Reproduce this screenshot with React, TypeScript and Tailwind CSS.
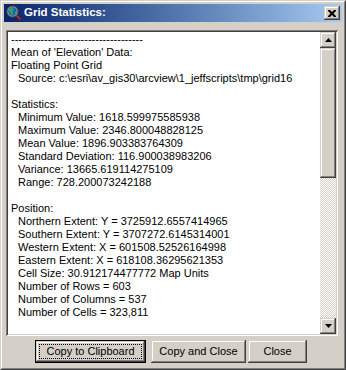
import React from "react";

const raised =
  "bg-[#d4d0c8] shadow-[inset_-1px_-1px_#404040,inset_1px_1px_#d4d0c8,inset_-2px_-2px_#808080,inset_2px_2px_#ffffff]";

const lines: { text: string; indent?: boolean }[] = [
  { text: "------------------------------------" },
  { text: "Mean of 'Elevation' Data:" },
  { text: "Floating Point Grid" },
  { text: "Source: c:\\esri\\av_gis30\\arcview\\1_jeffscripts\\tmp\\grid16", indent: true },
  { text: "" },
  { text: "Statistics:" },
  { text: "Minimum Value: 1618.599975585938", indent: true },
  { text: "Maximum Value: 2346.800048828125", indent: true },
  { text: "Mean Value: 1896.903383764309", indent: true },
  { text: "Standard Deviation: 116.900038983206", indent: true },
  { text: "Variance: 13665.619114275109", indent: true },
  { text: "Range: 728.200073242188", indent: true },
  { text: "" },
  { text: "Position:" },
  { text: "Northern Extent: Y = 3725912.6557414965", indent: true },
  { text: "Southern Extent: Y = 3707272.6145314001", indent: true },
  { text: "Western Extent: X = 601508.52526164998", indent: true },
  { text: "Eastern Extent: X = 618108.36295621353", indent: true },
  { text: "Cell Size: 30.912174477772 Map Units", indent: true },
  { text: "Number of Rows = 603", indent: true },
  { text: "Number of Columns = 537", indent: true },
  { text: "Number of Cells = 323,811", indent: true },
];

const GridIcon = () => (
  <svg width="16" height="16" viewBox="0 0 16 16">
    <line x1="10" y1="10" x2="15" y2="15" stroke="#8b1a1a" strokeWidth="2.4" />
    <line x1="10" y1="10" x2="14" y2="14" stroke="#d04040" strokeWidth="1" />
    <circle cx="6.5" cy="6.5" r="5.6" fill="#a0a0a0" stroke="#404040" strokeWidth="1" />
    <circle cx="6.5" cy="6.5" r="4.2" fill="#1f4fd0" />
    <path d="M4 3.5 L7 3 L8 5 L6.5 6.5 L7.5 9 L5.5 10 L4 7.5 L3 5.5 Z" fill="#20b040" />
    <path d="M8.5 7 L10 6.5 L10.3 8.5 L9 9.5 Z" fill="#20b040" />
  </svg>
);

const WinButton = ({
  label,
  width,
  focused,
}: {
  label: string;
  width: string;
  focused?: boolean;
}) =>
  focused ? (
    <div className={`${width} h-[23px] border border-black`}>
      <div className={`${raised} h-full w-full p-[3px]`}>
        <div className="flex h-full w-full items-center justify-center border border-dotted border-black text-[11px]">
          {label}
        </div>
      </div>
    </div>
  ) : (
    <div className={`${raised} ${width} flex h-[23px] items-center justify-center text-[11px]`}>
      {label}
    </div>
  );

export default function App() {
  return (
    <div
      className="relative h-[370px] w-[346px] border border-t-[#d4d0c8] border-l-[#d4d0c8] border-r-[#404040] border-b-[#404040] bg-[#d4d0c8] text-black"
      style={{ fontFamily: '"Liberation Sans", Arial, sans-serif' }}
    >
      <div className="h-full w-full border border-t-white border-l-white border-r-[#808080] border-b-[#808080] p-[2px]">
        {/* title bar */}
        <div className="flex h-[18px] items-center bg-gradient-to-r from-[#0a246a] to-[#a6caf0] pl-[2px] pr-[2px]">
          <GridIcon />
          <span className="ml-[2px] text-[11.5px] font-bold text-white">Grid Statistics:</span>
          <div className={`${raised} ml-auto flex h-[14px] w-[16px] items-center justify-center`}>
            <svg width="8" height="7" viewBox="0 0 8 7">
              <path d="M0 0h2l2 2 2-2h2v1L5.5 3.5 8 6v1H6L4 5 2 7H0V6l2.5-2.5L0 1z" fill="#000" />
            </svg>
          </div>
        </div>

        {/* text box */}
        <div className="ml-[2px] mt-[8px] flex h-[306px] w-[332px] bg-white p-[2px] shadow-[inset_1px_1px_#808080,inset_-1px_-1px_#ffffff,inset_2px_2px_#404040,inset_-2px_-2px_#d4d0c8]">
          <div className="flex-1 overflow-hidden pl-[3px] pt-[1px] text-[11px] leading-[13px]">
            {lines.map((l, i) => (
              <div key={i} className={`h-[13px] whitespace-pre ${l.indent ? "pl-[7px]" : ""}`}>
                {l.text}
              </div>
            ))}
          </div>
          <div className="flex w-[16px] flex-col">
            <div className={`${raised} flex h-[16px] items-center justify-center`}>
              <svg width="7" height="4" viewBox="0 0 7 4">
                <path d="M3.5 0 L7 4 L0 4 Z" fill="#000" />
              </svg>
            </div>
            <div className={`${raised} h-[130px]`} />
            <div className="flex-1 bg-[repeating-conic-gradient(#d4d0c8_0_25%,#ffffff_0_50%)] bg-[length:2px_2px]" />
            <div className={`${raised} flex h-[16px] items-center justify-center`}>
              <svg width="7" height="4" viewBox="0 0 7 4">
                <path d="M0 0 L7 0 L3.5 4 Z" fill="#000" />
              </svg>
            </div>
          </div>
        </div>

        {/* buttons */}
        <div className="mt-[4px] flex pl-[31px]">
          <WinButton label="Copy to Clipboard" width="w-[111px]" focused />
          <div className="ml-[5px]">
            <WinButton label="Copy and Close" width="w-[95px]" />
          </div>
          <div className="ml-[2px]">
            <WinButton label="Close" width="w-[59px]" />
          </div>
        </div>
      </div>
    </div>
  );
}
